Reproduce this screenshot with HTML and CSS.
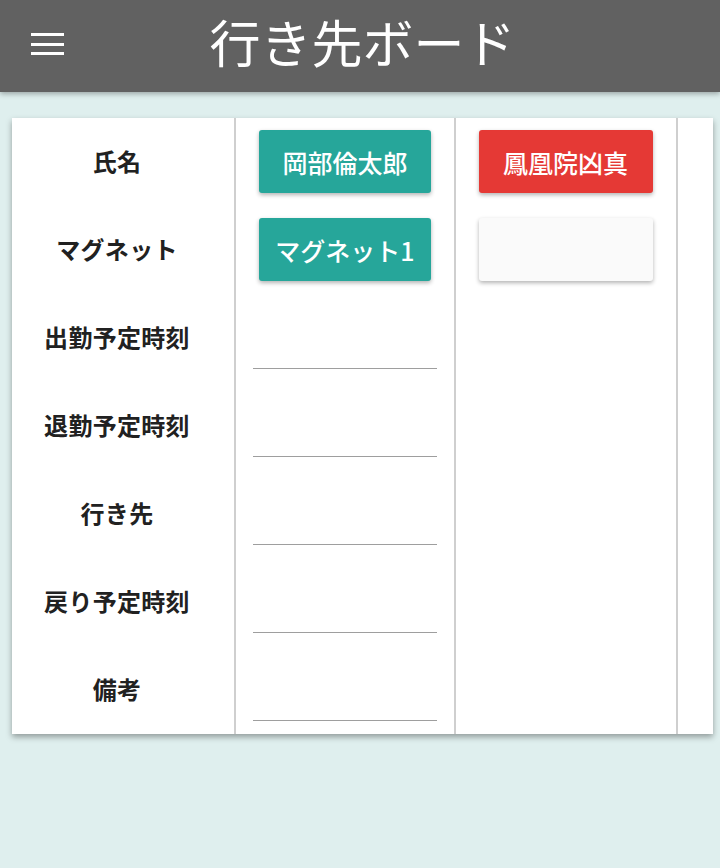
FILE: index.html
```html
<!DOCTYPE html>
<html lang="ja">
<head>
<meta charset="utf-8">
<title>行き先ボード</title>
<link rel="stylesheet" href="styles.css">
</head>
<body>
<header class="appbar">
  <button class="menu" aria-label="menu">
    <span class="bar"></span><span class="bar"></span><span class="bar"></span>
  </button>
  <h1 class="title">行き先ボード</h1>
</header>
<main class="content">
  <div class="board">
    <div class="col labels">
      <div class="cell">氏名</div>
      <div class="cell">マグネット</div>
      <div class="cell">出勤予定時刻</div>
      <div class="cell">退勤予定時刻</div>
      <div class="cell">行き先</div>
      <div class="cell">戻り予定時刻</div>
      <div class="cell">備考</div>
    </div>
    <div class="col person">
      <div class="cell"><div class="btn teal">岡部倫太郎</div></div>
      <div class="cell"><div class="btn teal">マグネット1</div></div>
      <div class="cell"><div class="field"></div></div>
      <div class="cell"><div class="field"></div></div>
      <div class="cell"><div class="field"></div></div>
      <div class="cell"><div class="field"></div></div>
      <div class="cell"><div class="field"></div></div>
    </div>
    <div class="col person">
      <div class="cell"><div class="btn red">鳳凰院凶真</div></div>
      <div class="cell"><div class="btn blank"></div></div>
      <div class="cell"></div>
      <div class="cell"></div>
      <div class="cell"></div>
      <div class="cell"></div>
      <div class="cell"></div>
    </div>
    <div class="col rest"></div>
  </div>
</main>
</body>
</html>
```
FILE: styles.css
```css
html, body {
  margin: 0;
  padding: 0;
}
body {
  background: #dfefee;
  font-family: "Noto Sans CJK JP", "Noto Sans", sans-serif;
  min-height: 868px;
}
.appbar {
  position: relative;
  height: 92px;
  background: #616161;
  box-shadow: 0 2px 5px rgba(0,0,0,0.3);
  display: flex;
  align-items: center;
  justify-content: center;
}
.menu {
  position: absolute;
  left: 31px;
  top: 33px;
  width: 33px;
  height: 22px;
  padding: 0;
  border: 0;
  background: transparent;
  display: flex;
  flex-direction: column;
  justify-content: space-between;
}
.bar {
  display: block;
  height: 3px;
  width: 33px;
  background: #fff;
}
.title {
  margin: 0 0 10px 5px;
  color: #fff;
  font-weight: 400;
  font-size: 51px;
  line-height: 1;
  letter-spacing: 0;
}
.content {
  padding: 26px 7px 0 12px;
}
.board {
  display: flex;
  background: #fff;
  box-shadow: 0 3px 6px rgba(0,0,0,0.35);
}
.col {
  display: flex;
  flex-direction: column;
}
.labels {
  width: 222px;
  border-right: 2px solid #cfcfcf;
}
.person {
  width: 218px;
  border-right: 2px solid #cfcfcf;
}
.person + .person {
  width: 220px;
}
.rest {
  flex: 1;
}
.cell {
  height: 88px;
  box-sizing: border-box;
  display: flex;
  align-items: center;
  justify-content: center;
  position: relative;
}
.labels .cell {
  padding-right: 12px;
  padding-bottom: 4px;
  font-weight: 700;
  font-size: 24px;
  letter-spacing: 0.3px;
  color: #212121;
}
.btn {
  width: 172px;
  height: 63px;
  border-radius: 3px;
  box-shadow: 0 2px 4px rgba(0,0,0,0.3);
  color: #fff;
  font-size: 25px;
  font-weight: 500;
  display: flex;
  align-items: center;
  justify-content: center;
  margin-top: -1px;
}
.btn.red {
  margin-left: -1px;
  width: 174px;
}
.btn.blank {
  margin-left: -1px;
  width: 174px;
}
.teal { background: #26a69a; }
.red { background: #e53935; }
.blank { background: #fafafa; }
.field {
  align-self: flex-end;
  width: 184px;
  height: 0;
  border-bottom: 1px solid #9e9e9e;
  margin-bottom: 13px;
}
```
